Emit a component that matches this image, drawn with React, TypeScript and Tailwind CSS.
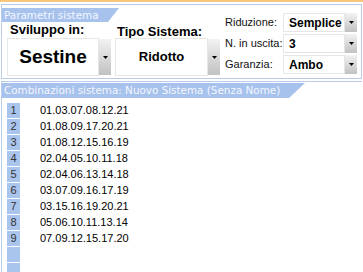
import React from "react";

const combos = [
  "01.03.07.08.12.21",
  "01.08.09.17.20.21",
  "01.08.12.15.16.19",
  "02.04.05.10.11.18",
  "02.04.06.13.14.18",
  "03.07.09.16.17.19",
  "03.15.16.19.20.21",
  "05.06.10.11.13.14",
  "07.09.12.15.17.20",
  "",
  "",
];

function Arrow() {
  return (
    <svg width="5" height="3" viewBox="0 0 5 3">
      <polygon points="0,0 5,0 2.5,3" fill="#000" />
    </svg>
  );
}

function DropBtn() {
  return (
    <div className="w-[12px] self-stretch flex items-center justify-center bg-gradient-to-b from-[#f2f2f2] to-[#c2c2c2]">
      <Arrow />
    </div>
  );
}

function SmallSelect({ value }: { value: string }) {
  return (
    <div className="flex h-[19px] w-[74px]">
      <div className="w-[62px] border border-[#e6e6e6] bg-white flex items-center pl-[5px] text-[12px] font-bold text-black leading-none">
        {value}
      </div>
      <DropBtn />
    </div>
  );
}

export default function App() {
  const sans = { fontFamily: '"Liberation Sans", Arial, sans-serif' };
  const dv = { fontFamily: '"DejaVu Sans", Verdana, sans-serif' };
  return (
    <div className="w-[363px] h-[272px] bg-white overflow-hidden" style={sans}>
      <div className="h-[2px] bg-[#f7c77b]" />
      <div className="h-[2px]" />
      <div className="mx-[1px] h-[75px] border border-[#b8cdee] flex">
        <div className="w-[221px] flex flex-col">
          <div className="mt-[3px] h-[14px] flex">
            <div
              className="w-[106px] bg-[#a7c2ec] text-[#f4f7ff] text-[10.4px] pl-[2px] leading-[14px] whitespace-nowrap"
              style={dv}
            >
              Parametri sistema
            </div>
            <svg width="11" height="14" viewBox="0 0 11 14">
              <polygon points="0,0 11,0 0,14" fill="#a7c2ec" />
            </svg>
          </div>
          <div className="h-[16px] flex">
            <div className="w-[113px] pl-[8px] font-bold text-[13px] leading-[16px] text-black">
              Sviluppo in:
            </div>
            <div className="pt-[2px] pl-[2px] font-bold text-[13px] leading-[16px] text-black">
              Tipo Sistema:
            </div>
          </div>
          <div className="h-[38px] flex">
            <div className="ml-[5px] w-[104px] flex">
              <div className="w-[92px] border border-[#e6e6e6] bg-white flex items-center justify-center font-bold text-[19px] text-black">
                Sestine
              </div>
              <div className="w-[12px] my-[1px] flex items-center justify-center bg-gradient-to-b from-[#f2f2f2] to-[#c2c2c2]">
                <Arrow />
              </div>
            </div>
            <div className="ml-[4px] w-[105px] flex">
              <div className="w-[93px] border border-[#e6e6e6] bg-white flex items-center justify-center font-bold text-[13px] text-black">
                Ridotto
              </div>
              <div className="w-[12px] my-[1px] flex items-center justify-center bg-gradient-to-b from-[#f2f2f2] to-[#c2c2c2]">
                <Arrow />
              </div>
            </div>
          </div>
        </div>
        <div className="pt-[8px] pl-[2px] flex flex-col gap-[2px]">
          {[
            ["Riduzione:", "Semplice"],
            ["N. in uscita:", "3"],
            ["Garanzia:", "Ambo"],
          ].map(([l, v]) => (
            <div key={l} className="flex items-center h-[19px]">
              <div className="w-[58px] text-[11px] text-[#111]">{l}</div>
              <SmallSelect value={v} />
            </div>
          ))}
        </div>
      </div>
      <div className="mt-[2px] mx-[1px] border-t border-l border-[#b8cdee] h-[200px]">
        <div className="mt-[1px] h-[15px] flex">
          <div
            className="w-[287px] bg-[#a7c2ec] text-[#f4f7ff] text-[10.4px] pl-[2px] leading-[15px] whitespace-nowrap"
            style={dv}
          >
            Combinazioni sistema: Nuovo Sistema (Senza Nome)
          </div>
          <svg width="16" height="15" viewBox="0 0 16 15">
            <polygon points="0,0 16,0 0,15" fill="#a7c2ec" />
          </svg>
        </div>
        <div className="pt-[5px] pl-[5px] flex flex-col gap-[1px]">
          {combos.map((c, i) => (
            <div key={i} className="flex h-[15px] items-center">
              <div className="w-[13px] h-[15px] bg-[#a9c5ed] text-[11px] text-[#333] flex items-center justify-center leading-none">
                {c ? i + 1 : ""}
              </div>
              <div className="pl-[20px] text-[11px] text-black leading-none">{c}</div>
            </div>
          ))}
        </div>
      </div>
    </div>
  );
}
